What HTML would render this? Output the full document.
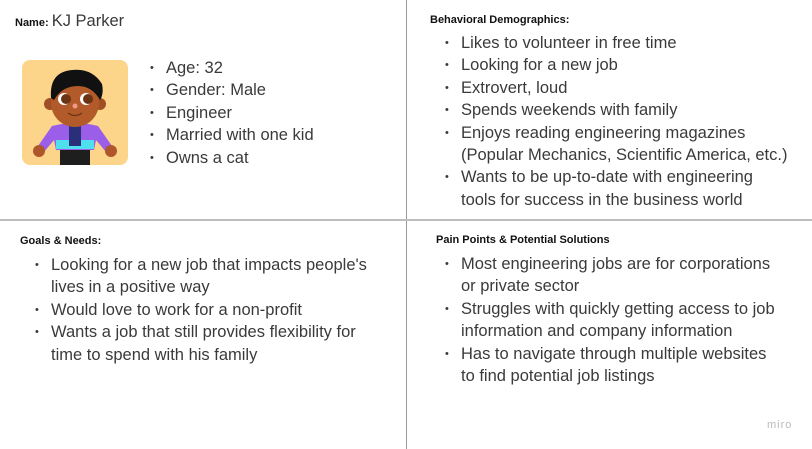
<!DOCTYPE html>
<html><head><meta charset="utf-8"><style>
body{margin:0;width:812px;height:449px;background:#fff;position:relative;overflow:hidden;font-family:"Liberation Sans",sans-serif;color:#3a3a3a}
.v{position:absolute;left:406px;top:0;width:1px;height:449px;background:#9a9a9a}
.h{position:absolute;left:0;top:219px;width:812px;height:2px;background:#bdbdbd}
.t{position:absolute;font-size:11px;font-weight:bold;color:#111}
ul{position:absolute;margin:0;padding:0;list-style:none;font-size:16.5px;line-height:22.4px;white-space:nowrap}
li{position:relative;padding-left:16px}
li:before{content:"•";position:absolute;left:0;font-size:11px}
</style></head><body>
<div class="v"></div><div class="h"></div>
<div class="t" style="left:15px;top:12px">Name: <span style="font-weight:normal;font-size:16.5px;color:#3a3a3a">KJ Parker</span></div>
<svg style="position:absolute;left:22px;top:60px" width="106" height="105" viewBox="0 0 106 105">
<rect width="106" height="105" rx="8" fill="#fdd58a"/>
<rect x="38" y="88" width="30" height="17" fill="#1e1e1e"/>
<path d="M30 66 Q53 60 76 66 L90 86 L84 92 L74 80 L72 90 L34 90 L32 80 L22 92 L16 86 Z" fill="#9b5ee8"/>
<rect x="34" y="80" width="38" height="9" fill="#4fe0f0"/>
<rect x="47" y="64" width="12" height="22" fill="#2a2f7a"/>
<circle cx="17" cy="91" r="6" fill="#b0562b"/><circle cx="89" cy="91" r="6" fill="#b0562b"/>
<circle cx="28" cy="44" r="6" fill="#a04f25"/><circle cx="78" cy="44" r="6" fill="#a04f25"/>
<circle cx="53" cy="43" r="24" fill="#b35a2a"/>
<path d="M29 38 Q27 12 50 10 Q70 8 80 24 Q82 34 78 40 Q70 26 56 26 Q40 26 32 40 Z" fill="#111"/>
<circle cx="42" cy="39" r="6" fill="#fff"/><circle cx="44" cy="39" r="5" fill="#6b3414"/>
<circle cx="64" cy="39" r="6" fill="#fff"/><circle cx="66" cy="39" r="5" fill="#6b3414"/>
<circle cx="53" cy="46" r="2.5" fill="#f29a8a"/>
<path d="M46 53 Q53 58 60 53" stroke="#6b3414" stroke-width="1.3" fill="none"/>
</svg>
<ul style="left:150px;top:57px">
<li>Age: 32</li><li>Gender: Male</li><li>Engineer</li><li>Married with one kid</li><li>Owns a cat</li></ul>
<div class="t" style="left:430px;top:14px">Behavioral Demographics:</div>
<ul style="left:445px;top:32px">
<li>Likes to volunteer in free time</li><li>Looking for a new job</li><li>Extrovert, loud</li><li>Spends weekends with family</li><li>Enjoys reading engineering magazines<br>(Popular Mechanics, Scientific America, etc.)</li><li>Wants to be up-to-date with engineering<br>tools for success in the business world</li></ul>
<div class="t" style="left:20px;top:235px">Goals &amp; Needs:</div>
<ul style="left:35px;top:254px">
<li>Looking for a new job that impacts people's<br>lives in a positive way</li><li>Would love to work for a non-profit</li><li>Wants a job that still provides flexibility for<br>time to spend with his family</li></ul>
<div class="t" style="left:436px;top:234px">Pain Points &amp; Potential Solutions</div>
<ul style="left:445px;top:253px">
<li>Most engineering jobs are for corporations<br>or private sector</li><li>Struggles with quickly getting access to job<br>information and company information</li><li>Has to navigate through multiple websites<br>to find potential job listings</li></ul>
<div style="position:absolute;left:767px;top:419px;font-size:11px;color:#bbb;letter-spacing:1px">miro</div>
</body></html>
